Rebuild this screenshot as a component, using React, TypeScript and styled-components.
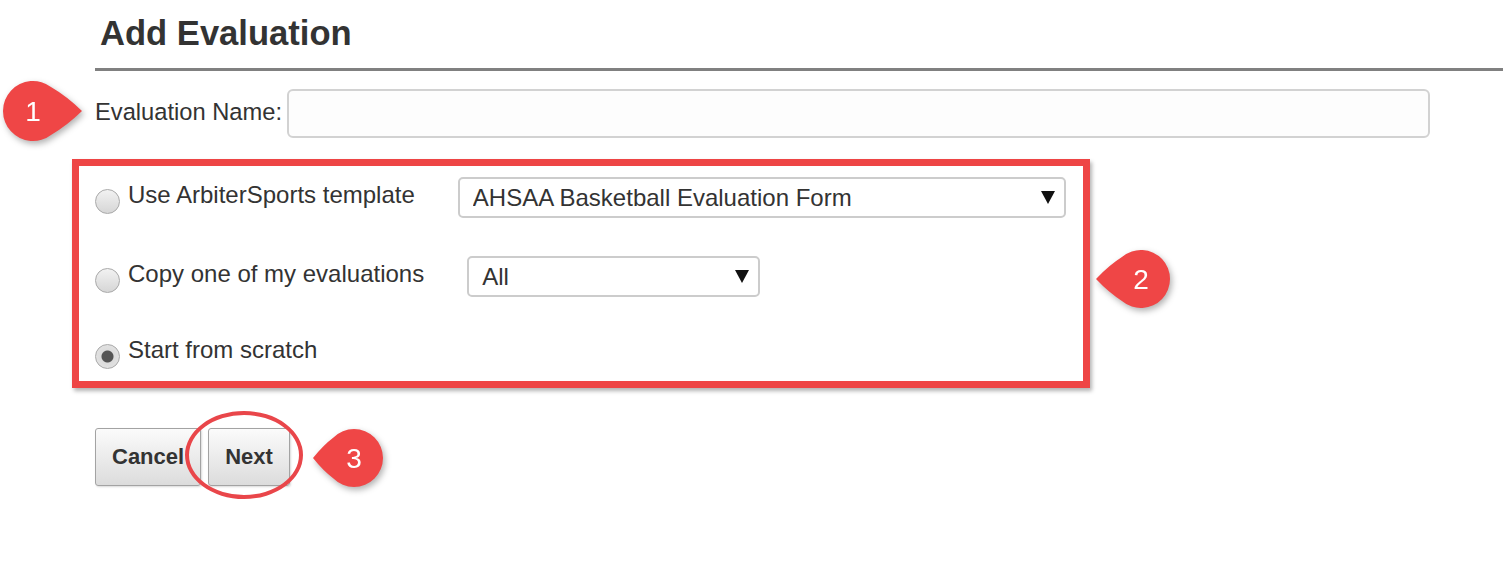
import styled, { createGlobalStyle } from "styled-components";
import { useState } from "react";

const GlobalStyle = createGlobalStyle`
  body {
    margin: 0;
    background: #ffffff;
    font-family: "Liberation Sans", Arial, sans-serif;
    color: #333333;
  }
`;

const Page = styled.div`
  position: relative;
  min-height: 566px;
  padding-left: 95px;
  overflow: hidden;
`;

const Title = styled.h1`
  margin: 0;
  padding: 16px 0 18px 5px;
  font-size: 34.6px;
  line-height: 34px;
  font-weight: 700;
  color: #333333;
  border-bottom: 3px solid #808080;
`;

const NameRow = styled.div`
  display: flex;
  align-items: center;
  margin-top: 18px;
`;

const FieldLabel = styled.label`
  font-size: 23.7px;
  line-height: 24px;
  margin-bottom: 4px;
  white-space: nowrap;
`;

const TextInput = styled.input`
  box-sizing: border-box;
  width: 1143px;
  height: 49px;
  margin-left: 5px;
  border: 2px solid #d2d2d2;
  border-radius: 6px;
  background: #fdfdfd;
  font: inherit;
  font-size: 22px;
  padding: 0 12px;
  outline: none;
`;

const HighlightBox = styled.div`
  box-sizing: border-box;
  width: 1018px;
  margin: 21px 0 0 -23px;
  padding: 11px 0 12px 16px;
  border: 7px solid #ee4545;
  box-shadow: 2px 3px 4px rgba(0, 0, 0, 0.3);
`;

const OptionRow = styled.div<{ $gap: number }>`
  display: flex;
  align-items: flex-start;
  margin-top: ${(p) => p.$gap}px;
`;

const OptionLabel = styled.label`
  display: flex;
  align-items: flex-start;
  margin-top: 6px;
  font-size: 24px;
  line-height: 24px;
  white-space: nowrap;
  cursor: pointer;
`;

const Radio = styled.input`
  appearance: none;
  box-sizing: border-box;
  width: 25px;
  height: 25px;
  margin: 5.5px 8px 0 0;
  border: 1px solid #a9a9a9;
  border-radius: 50%;
  background: linear-gradient(#f2f2f2, #d6d6d6);
  &:checked {
    background: radial-gradient(circle, #555555 0 5.5px, #dcdcdc 6.5px, #e6e6e6 100%);
  }
`;

const SelectWrap = styled.div`
  position: relative;
  margin-left: 43px;
`;

const Select = styled.select<{ $width: number }>`
  appearance: none;
  box-sizing: border-box;
  width: ${(p) => p.$width}px;
  height: 41px;
  padding: 0 40px 0 13px;
  border: 2px solid #cccccc;
  border-radius: 5px;
  background: #ffffff;
  color: #333333;
  font-family: "Liberation Sans", Arial, sans-serif;
  font-size: 24px;
  outline: none;
`;

const Arrow = styled.span`
  position: absolute;
  right: 11px;
  top: 14px;
  width: 0;
  height: 0;
  border-left: 7px solid transparent;
  border-right: 7px solid transparent;
  border-top: 13px solid #111111;
  pointer-events: none;
`;

const ButtonRow = styled.div`
  display: flex;
  gap: 7px;
  margin-top: 40px;
`;

const Button = styled.button`
  height: 58px;
  padding: 0 16px;
  border: 1px solid #a3a3a3;
  border-radius: 3px;
  background: linear-gradient(#fbfbfb, #dcdcdc);
  box-shadow: 1px 1px 2px rgba(0, 0, 0, 0.15);
  color: #333333;
  font-family: "Liberation Sans", Arial, sans-serif;
  font-size: 22px;
  font-weight: 700;
  cursor: pointer;
`;

const NextWrap = styled.div`
  position: relative;
`;

const Ring = styled.span`
  position: absolute;
  left: -23px;
  top: -17px;
  width: 118px;
  height: 88px;
  box-sizing: border-box;
  border: 4px solid #e9464a;
  border-radius: 50%;
  pointer-events: none;
`;

const BadgeSvg = styled.svg<{ $x: number; $y: number }>`
  position: absolute;
  left: ${(p) => p.$x}px;
  top: ${(p) => p.$y}px;
  overflow: visible;
  filter: drop-shadow(2px 3px 3px rgba(0, 0, 0, 0.3));
`;

const PAD = 4;

// circle of radius r drawn out to a point at distance d, sides bowed out a little
const drop = (r: number, d: number) => {
  const c = r / d;
  const s = Math.sqrt(1 - c * c);
  const tx = r * c;
  const ty = r * s;
  const qx = (tx + d) / 2;
  const qy = (ty / 2) * 1.25;
  return (
    `M ${tx} ${-ty} Q ${qx} ${-qy} ${d} 0 Q ${qx} ${qy} ${tx} ${ty} ` +
    `A ${r} ${r} 0 1 1 ${tx} ${-ty} Z`
  );
};

const Badge = ({
  cx,
  cy,
  r,
  d,
  left,
  n,
}: {
  cx: number;
  cy: number;
  r: number;
  d: number;
  left?: boolean;
  n: number;
}) => {
  const w = r + d + PAD * 2;
  const h = r * 2 + PAD * 2;
  const ox = left ? PAD + d : PAD + r;
  const oy = PAD + r;
  return (
    <BadgeSvg $x={cx - ox} $y={cy - oy} width={w} height={h}>
      <path
        d={drop(r, d)}
        fill="#ef4646"
        transform={`translate(${ox} ${oy}) scale(${left ? -1 : 1} 1)`}
      />
      <text
        x={ox}
        y={oy + 10}
        fill="#ffffff"
        fontSize="28"
        textAnchor="middle"
        fontFamily="'Liberation Sans', Arial, sans-serif"
      >
        {n}
      </text>
    </BadgeSvg>
  );
};

export default function App() {
  const [mode, setMode] = useState("scratch");
  const [name, setName] = useState("");

  return (
    <Page>
      <GlobalStyle />
      <Title>Add Evaluation</Title>

      <NameRow>
        <FieldLabel htmlFor="evalName">Evaluation Name:</FieldLabel>
        <TextInput id="evalName" value={name} onChange={(e) => setName(e.target.value)} />
      </NameRow>

      <HighlightBox>
        <OptionRow $gap={0}>
          <OptionLabel>
            <Radio type="radio" name="mode" checked={mode === "template"} onChange={() => setMode("template")} />
            <span>Use ArbiterSports template</span>
          </OptionLabel>
          <SelectWrap>
            <Select $width={608} defaultValue="ahsaa">
              <option value="ahsaa">AHSAA Basketball Evaluation Form</option>
            </Select>
            <Arrow />
          </SelectWrap>
        </OptionRow>

        <OptionRow $gap={38}>
          <OptionLabel>
            <Radio type="radio" name="mode" checked={mode === "copy"} onChange={() => setMode("copy")} />
            <span>Copy one of my evaluations</span>
          </OptionLabel>
          <SelectWrap>
            <Select $width={293} defaultValue="all">
              <option value="all">All</option>
            </Select>
            <Arrow />
          </SelectWrap>
        </OptionRow>

        <OptionRow $gap={35}>
          <OptionLabel>
            <Radio type="radio" name="mode" checked={mode === "scratch"} onChange={() => setMode("scratch")} />
            <span>Start from scratch</span>
          </OptionLabel>
        </OptionRow>
      </HighlightBox>

      <ButtonRow>
        <Button>Cancel</Button>
        <NextWrap>
          <Button>Next</Button>
          <Ring />
        </NextWrap>
      </ButtonRow>

      <Badge cx={33} cy={111} r={30} d={49} n={1} />
      <Badge cx={1141} cy={279} r={29} d={45} left n={2} />
      <Badge cx={354} cy={458} r={29} d={41} left n={3} />
    </Page>
  );
}
